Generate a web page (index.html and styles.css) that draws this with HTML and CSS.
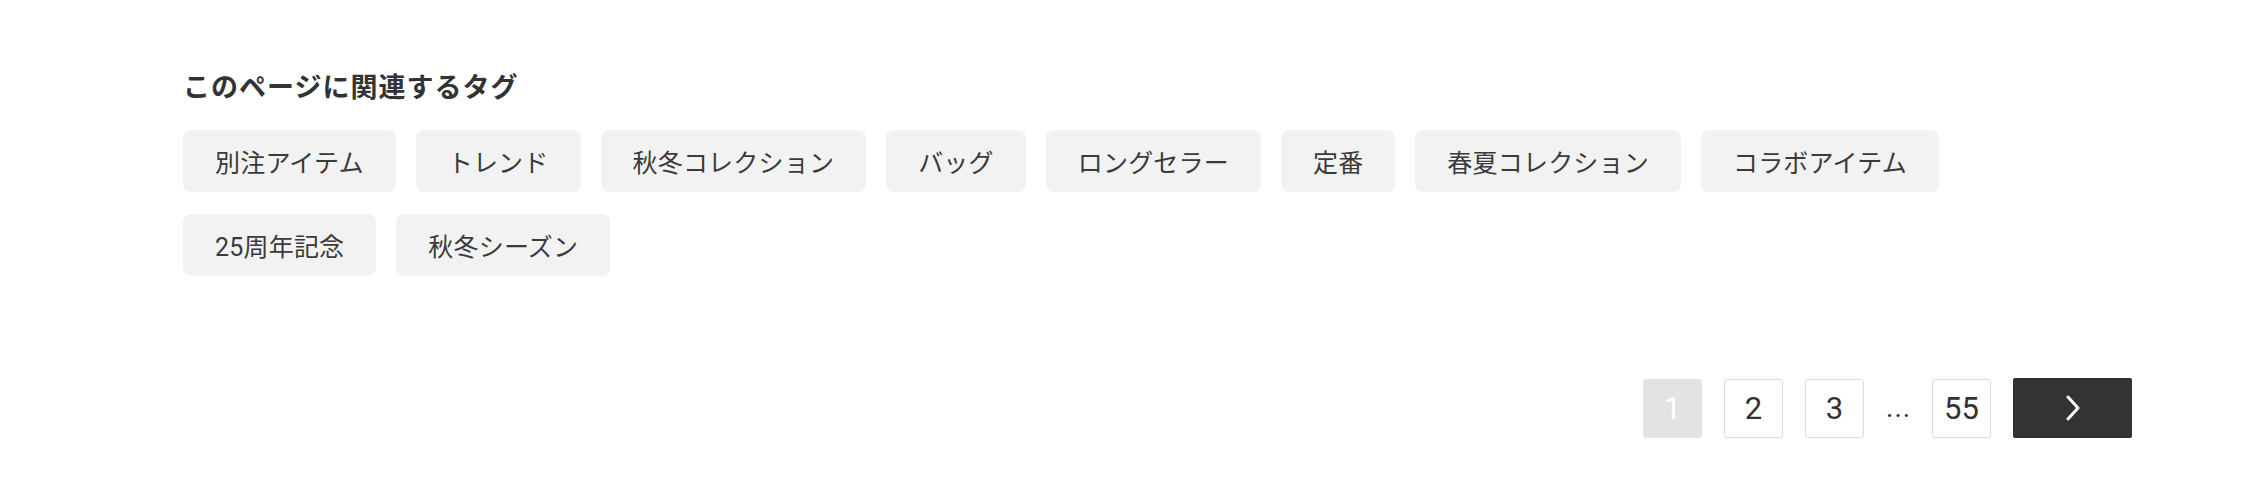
FILE: index.html
```html
<!DOCTYPE html>
<html lang="ja">
<head>
    <meta charset="UTF-8">
    <meta name="viewport" content="width=device-width, initial-scale=1.0">
    <title>関連タグ</title>
    <link rel="stylesheet" href="styles.css">
</head>
<body>

    <div class="wrap">
        <h2 class="tags-title">このページに関連するタグ</h2>

        <ul class="tag-list">
            <li><a class="tag" href="#">別注アイテム</a></li>
            <li><a class="tag" href="#">トレンド</a></li>
            <li><a class="tag" href="#">秋冬コレクション</a></li>
            <li><a class="tag" href="#">バッグ</a></li>
            <li><a class="tag" href="#">ロングセラー</a></li>
            <li><a class="tag" href="#">定番</a></li>
            <li><a class="tag" href="#">春夏コレクション</a></li>
            <li><a class="tag" href="#">コラボアイテム</a></li>
            <li><a class="tag" href="#">25周年記念</a></li>
            <li><a class="tag" href="#">秋冬シーズン</a></li>
        </ul>

        <nav class="pager">
            <span class="page current">1</span>
            <a class="page" href="#">2</a>
            <a class="page" href="#">3</a>
            <span class="dots">...</span>
            <a class="page" href="#">55</a>
            <a class="next" href="#">
                <svg width="16" height="26" viewBox="0 0 16 26">
                    <polyline points="3,2 13,13 3,24" fill="none" stroke="#fff" stroke-width="3" stroke-linecap="round" stroke-linejoin="round"/>
                </svg>
            </a>
        </nav>
    </div>

</body>
</html>
```

FILE: styles.css
```css
body {
    margin: 0;
    padding: 0;
    background-color: #fff;
    color: #333;
    font-family: Roboto, "Noto Sans CJK JP", sans-serif;
}

.wrap {
    padding: 66px 110px 0 183px;
}

.tags-title {
    margin: 0 0 24px;
    font-family: "Noto Sans CJK JP", sans-serif;
    font-size: 27px;
    font-weight: bold;
    line-height: 40px;
    letter-spacing: 1px;
    color: #333;
}

.tag-list {
    list-style: none;
    margin: 0;
    padding: 0;
    display: flex;
    flex-wrap: wrap;
    gap: 22px 20px;
}

.tag {
    display: flex;
    align-items: center;
    height: 62px;
    padding: 0 32px;
    background-color: #f2f2f2;
    border-radius: 8px;
    color: #3a3a3a;
    text-decoration: none;
    font-size: 25px;
    font-weight: 400;
    letter-spacing: 0.2px;
    font-family: Roboto, "Noto Sans CJK JP", sans-serif;
}

.pager {
    display: flex;
    justify-content: flex-end;
    align-items: center;
    gap: 22px;
    margin-top: 102px;
}

.page {
    display: flex;
    align-items: center;
    justify-content: center;
    width: 57px;
    height: 57px;
    border: 1px solid #ddd;
    border-radius: 3px;
    color: #333;
    text-decoration: none;
    font-size: 31px;
}

.page.current {
    background-color: #e3e3e3;
    border-color: #e3e3e3;
    color: #fff;
}

.dots {
    width: 24px;
    text-align: center;
    font-size: 28px;
    line-height: 1;
    letter-spacing: 1px;
    white-space: nowrap;
    color: #333;
}

.next {
    display: flex;
    align-items: center;
    justify-content: center;
    width: 119px;
    height: 60px;
    background-color: #333;
    border-radius: 2px;
}
```
